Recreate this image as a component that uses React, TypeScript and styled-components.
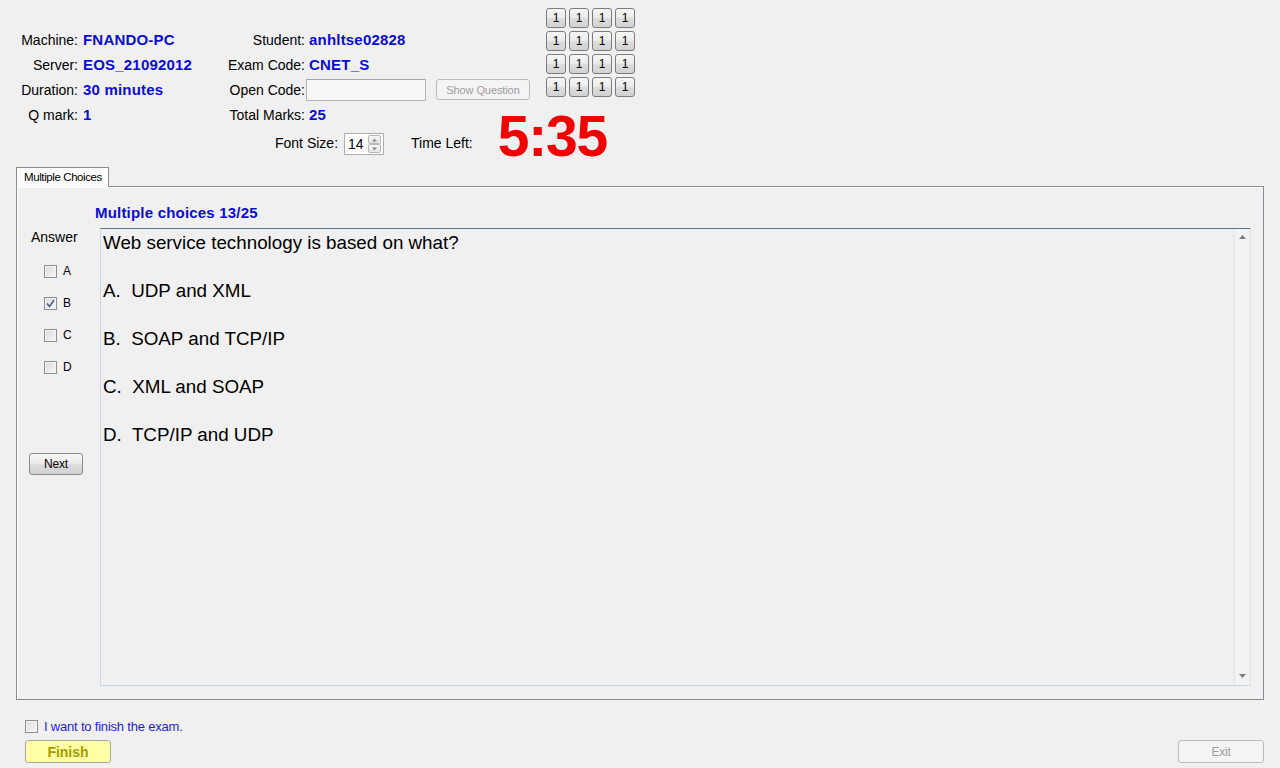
import React from "react";
import styled, { createGlobalStyle } from "styled-components";

const Global = createGlobalStyle`
  html, body { margin: 0; padding: 0; background: #f0f0f0; }
  body { font-family: "Liberation Sans", Arial, sans-serif; color: #000; }
  #root { width: 1280px; height: 768px; overflow: hidden; }
`;

const Page = styled.div`
  width: 1280px;
  height: 768px;
  background: #f0f0f0;
  display: flex;
  flex-direction: column;
`;

const Header = styled.div`
  height: 167px;
  box-sizing: border-box;
  padding-top: 8px;
  display: flex;
  align-items: flex-start;
`;

const InfoGrid = styled.div<{ $label: number; $gap: number; $width?: number }>`
  display: grid;
  grid-template-columns: ${(p) => p.$label}px auto;
  column-gap: ${(p) => p.$gap}px;
  grid-auto-rows: 25px;
  align-items: center;
  margin-top: 19px;
  ${(p) => (p.$width ? `width: ${p.$width}px;` : "")}
`;

const Label = styled.span`
  font-size: 14px;
  text-align: right;
  white-space: nowrap;
`;

const Value = styled.span`
  font-size: 15px;
  font-weight: bold;
  color: #0c0cd4;
  white-space: nowrap;
  letter-spacing: 0.2px;
`;

const CenterCol = styled.div`
  display: flex;
  flex-direction: column;
`;

const TopRow = styled.div`
  display: flex;
  align-items: flex-start;
`;

const InputRow = styled.div`
  display: flex;
  align-items: center;
  margin-left: -3px;
`;

const TextInput = styled.div`
  width: 120px;
  height: 22px;
  box-sizing: border-box;
  border: 1px solid #b4b6bb;
  border-top-color: #a4a6ab;
  background: #f6f6f6;
`;

const WinButton = styled.button<{ $w: number; $h: number; $disabled?: boolean; $yellow?: boolean }>`
  width: ${(p) => p.$w}px;
  height: ${(p) => p.$h}px;
  box-sizing: border-box;
  padding: 0;
  border-radius: 3px;
  font-family: "Liberation Sans", Arial, sans-serif;
  font-size: 12px;
  letter-spacing: -0.2px;
  cursor: default;
  border: 1px solid ${(p) => (p.$disabled ? "#b9bcbf" : "#8a8a8a")};
  color: ${(p) => (p.$disabled ? "#9d9d9d" : "#000")};
  background: ${(p) =>
    p.$yellow
      ? "#ffffa6"
      : p.$disabled
      ? "#f4f4f4"
      : "linear-gradient(#f6f6f6 0%, #ececec 45%, #dcdcdc 55%, #d2d2d2 100%)"};
`;

const ShowQuestion = styled(WinButton)`
  margin-left: 10px;
  font-size: 11px;
  letter-spacing: -0.1px;
`;

const FinishButton = styled(WinButton)`
  font-size: 14px;
  font-weight: bold;
  letter-spacing: 0;
  color: #a29c00;
  border-color: #a8a8a8;
`;

const ButtonGrid = styled.div`
  margin-left: 16px;
  display: grid;
  grid-template-columns: repeat(4, 20px);
  grid-auto-rows: 20px;
  gap: 3px;
`;

const GridButton = styled(WinButton)`
  font-size: 12px;
  letter-spacing: 0;
  border-color: #7c7c7c;
  line-height: 18px;
`;

const FontRow = styled.div`
  display: flex;
  align-items: center;
  height: 22px;
  margin-top: 6px;
  padding-left: 75px;
`;

const Spinner = styled.div`
  margin-left: 6px;
  width: 40px;
  height: 22px;
  box-sizing: border-box;
  border: 1px solid #abadb3;
  background: #fff;
  display: flex;
  align-items: center;
  justify-content: space-between;
  padding: 0 2px 0 3px;
  font-size: 14px;
`;

const SpinButtons = styled.div`
  display: flex;
  flex-direction: column;
`;

const SpinBtn = styled.div`
  width: 13px;
  height: 9px;
  box-sizing: border-box;
  border: 1px solid #b8b8b8;
  border-radius: 2px;
  background: linear-gradient(#f7f7f7, #e3e3e3);
  display: flex;
  align-items: center;
  justify-content: center;
`;

const TimeLabel = styled(Label)`
  margin-left: 27px;
  margin-bottom: 3px;
`;

const FontLabel = styled(Label)`
  margin-bottom: 3px;
`;

const Timer = styled.span`
  margin-left: 25px;
  font-size: 57px;
  font-weight: bold;
  color: #f20000;
  line-height: 22px;
  margin-bottom: 16px;
  letter-spacing: -1.2px;
`;

const TabStrip = styled.div`
  height: 19px;
  display: flex;
  padding-left: 16px;
`;

const Tab = styled.div`
  width: 93px;
  height: 20px;
  box-sizing: border-box;
  border: 1px solid #898c95;
  border-bottom: none;
  background: linear-gradient(#ffffff, #fafafa);
  font-size: 11.5px;
  letter-spacing: -0.4px;
  padding: 3px 0 0 7px;
  position: relative;
  z-index: 1;
`;

const Panel = styled.div`
  margin: 0 16px;
  height: 514px;
  box-sizing: border-box;
  border: 1px solid #898c95;
  box-shadow: inset 1px 1px 0 #ffffff;
  display: flex;
  flex-direction: column;
  padding: 0 12px 13px 0;
`;

const SectionTitle = styled.div`
  height: 41px;
  box-sizing: border-box;
  padding: 17px 0 0 78px;
  font-size: 15px;
  line-height: 18px;
  font-weight: bold;
  color: #0c0cd4;
  letter-spacing: 0.2px;
`;

const Body = styled.div`
  flex: 1;
  display: flex;
  min-height: 0;
`;

const AnswerCol = styled.div`
  width: 83px;
  flex: none;
  display: flex;
  flex-direction: column;
  padding-left: 12px;
  box-sizing: border-box;
`;

const AnswerLabel = styled.div`
  font-size: 14px;
  line-height: 18px;
  margin-left: 2px;
`;

const ChoiceList = styled.div`
  margin: 9px 0 0 15px;
  display: flex;
  flex-direction: column;
`;

const Choice = styled.div`
  height: 32px;
  display: flex;
  align-items: center;
  gap: 6px;
  font-size: 12px;
`;

const Box = styled.span`
  width: 13px;
  height: 13px;
  box-sizing: border-box;
  border: 1px solid #8e8f8f;
  background: linear-gradient(135deg, #dcdcdc, #f6f6f6);
  box-shadow: inset 0 0 0 1px #f4f4f4;
  display: inline-flex;
  align-items: center;
  justify-content: center;
  flex: none;
`;

const NextWrap = styled.div`
  margin-top: 70px;
`;

const TextBox = styled.div`
  flex: 1;
  display: flex;
  box-sizing: border-box;
  border-top: 1px solid #62718b;
  border-left: 1px solid #c8d8e6;
  border-bottom: 1px solid #c8d8e6;
  border-right: 1px solid #e2e8ef;
`;

const QuestionText = styled.div`
  flex: 1;
  padding: 2px 2px;
  font-size: 18.8px;
  line-height: 24px;
`;

const QLine = styled.div`
  margin-bottom: 24px;
  white-space: pre;
`;

const ScrollBar = styled.div`
  width: 16px;
  flex: none;
  box-sizing: border-box;
  border-left: 1px solid #e6e6e6;
  border-right: 1px solid #e9e9e9;
  background: #f3f3f3;
  display: flex;
  flex-direction: column;
  justify-content: space-between;
  align-items: center;
  padding: 6px 0 7px;
`;

const Footer = styled.div`
  display: flex;
  flex-direction: column;
  padding: 0 16px 0 25px;
`;

const FinishCheck = styled.div`
  margin-top: 18px;
  height: 16px;
  display: flex;
  align-items: center;
  gap: 6px;
  font-size: 13px;
  letter-spacing: -0.2px;
  color: #1f1fd6;
`;

const ButtonRow = styled.div`
  margin-top: 6px;
  display: flex;
  justify-content: space-between;
`;

const CheckBox = ({ checked }: { checked?: boolean }) => (
  <Box>
    {checked && (
      <svg width="9" height="9" viewBox="0 0 9 9">
        <path d="M1 4.5 L3.5 7.5 L8 1" fill="none" stroke="#4a5f8c" strokeWidth="1.6" />
      </svg>
    )}
  </Box>
);

const Arrow = ({ up, color = "#8a8a8a", w = 7 }: { up?: boolean; color?: string; w?: number }) => (
  <svg width={w} height={4} viewBox="0 0 7 4">
    <path d={up ? "M0 4 L3.5 0 L7 4 Z" : "M0 0 L3.5 4 L7 0 Z"} fill={color} />
  </svg>
);

export default function App() {
  const question = [
    "Web service technology is based on what?",
    "A.  UDP and XML",
    "B.  SOAP and TCP/IP",
    "C.  XML and SOAP",
    "D.  TCP/IP and UDP",
  ];
  return (
    <Page>
      <Global />
      <Header>
        <InfoGrid $label={78} $gap={5} $width={200}>
          <Label>Machine:</Label>
          <Value>FNANDO-PC</Value>
          <Label>Server:</Label>
          <Value>EOS_21092012</Value>
          <Label>Duration:</Label>
          <Value>30 minutes</Value>
          <Label>Q mark:</Label>
          <Value>1</Value>
        </InfoGrid>
        <CenterCol>
          <TopRow>
            <InfoGrid $label={105} $gap={4}>
              <Label>Student:</Label>
              <Value>anhltse02828</Value>
              <Label>Exam Code:</Label>
              <Value>CNET_S</Value>
              <Label>Open Code:</Label>
              <InputRow>
                <TextInput />
                <ShowQuestion $w={94} $h={21} $disabled>
                  Show Question
                </ShowQuestion>
              </InputRow>
              <Label>Total Marks:</Label>
              <Value>25</Value>
            </InfoGrid>
            <ButtonGrid>
              {Array.from({ length: 16 }).map((_, i) => (
                <GridButton key={i} $w={20} $h={20}>
                  1
                </GridButton>
              ))}
            </ButtonGrid>
          </TopRow>
          <FontRow>
            <FontLabel>Font Size:</FontLabel>
            <Spinner>
              <span>14</span>
              <SpinButtons>
                <SpinBtn>
                  <Arrow up w={5} />
                </SpinBtn>
                <SpinBtn>
                  <Arrow w={5} />
                </SpinBtn>
              </SpinButtons>
            </Spinner>
            <TimeLabel>Time Left:</TimeLabel>
            <Timer>5:35</Timer>
          </FontRow>
        </CenterCol>
      </Header>
      <TabStrip>
        <Tab>Multiple Choices</Tab>
      </TabStrip>
      <Panel>
        <SectionTitle>Multiple choices 13/25</SectionTitle>
        <Body>
          <AnswerCol>
            <AnswerLabel>Answer</AnswerLabel>
            <ChoiceList>
              {["A", "B", "C", "D"].map((c) => (
                <Choice key={c}>
                  <CheckBox checked={c === "B"} />
                  <span>{c}</span>
                </Choice>
              ))}
            </ChoiceList>
            <NextWrap>
              <WinButton $w={54} $h={22}>
                Next
              </WinButton>
            </NextWrap>
          </AnswerCol>
          <TextBox>
            <QuestionText>
              {question.map((q) => (
                <QLine key={q}>{q}</QLine>
              ))}
            </QuestionText>
            <ScrollBar>
              <Arrow up color="#7d7d7d" />
              <Arrow color="#7d7d7d" />
            </ScrollBar>
          </TextBox>
        </Body>
      </Panel>
      <Footer>
        <FinishCheck>
          <CheckBox />
          <span>I want to finish the exam.</span>
        </FinishCheck>
        <ButtonRow>
          <FinishButton $w={86} $h={23} $yellow>
            Finish
          </FinishButton>
          <WinButton $w={86} $h={23} $disabled>
            Exit
          </WinButton>
        </ButtonRow>
      </Footer>
    </Page>
  );
}
